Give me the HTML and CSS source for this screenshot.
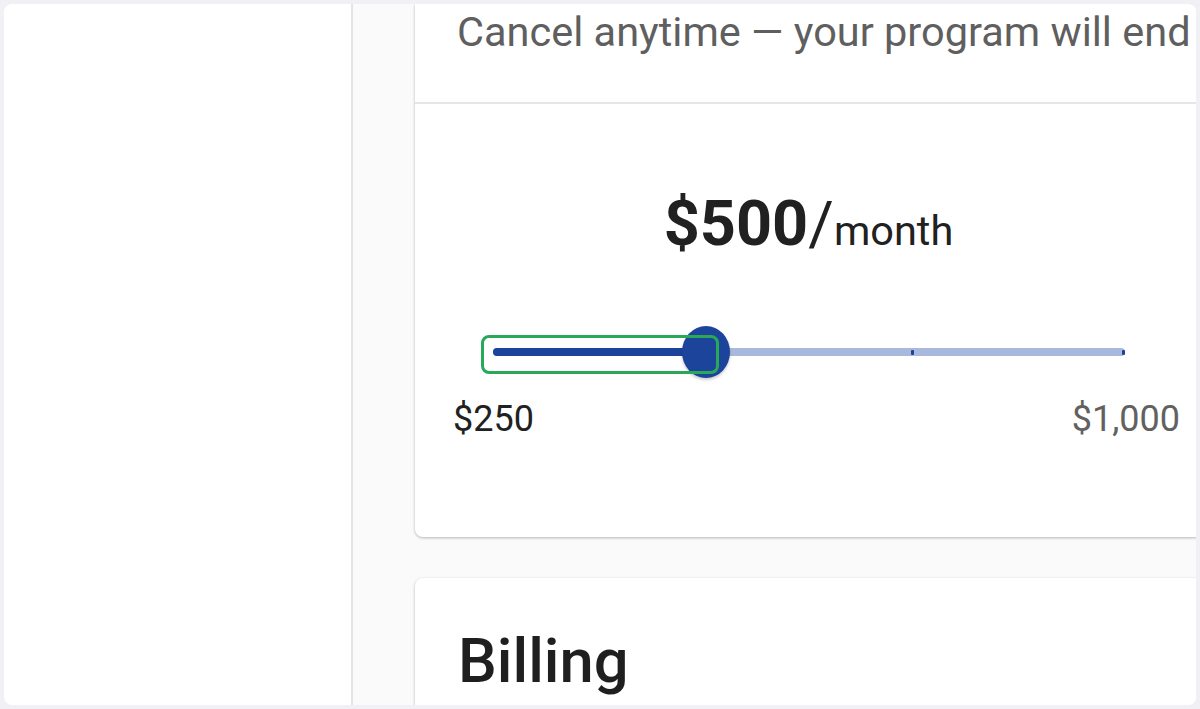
FILE: index.html
```html
<!DOCTYPE html>
<html lang="en">
<head>
    <meta charset="UTF-8">
    <title>Membership</title>
    <link rel="stylesheet" href="styles.css">
</head>
<body>
    <div class="frame">
        <div class="window">
            <aside class="sidebar"></aside>
            <main class="content">
                <section class="card plan">
                    <div class="note">
                        <p>Cancel anytime — your program will end</p>
                    </div>
                    <div class="amount">
                        <div class="price"><b>$500</b><span class="slash">/</span><span class="per">month</span></div>
                        <div class="slider">
                            <div class="track">
                                <div class="fill" style="width:33.33%"></div>
                                <i class="tick" style="left:66.66%"></i>
                                <i class="tick" style="left:100%"></i>
                                <div class="thumb" style="left:33.33%"></div>
                            </div>
                            <div class="focus"></div>
                        </div>
                        <div class="range">
                            <span class="min">$250</span>
                            <span class="max">$1,000</span>
                        </div>
                    </div>
                </section>
                <section class="card billing">
                    <h2>Billing</h2>
                </section>
            </main>
        </div>
    </div>
</body>
</html>
```

FILE: styles.css
```css
*{
    margin:0;
    padding:0;
    box-sizing:border-box;
}
html,body{
    width:1200px;
    height:709px;
    overflow:hidden;
}
body{
    background-color:#f1f0f5;
    font-family:Roboto, "Liberation Sans", sans-serif;
    color:#212121;
}
.frame{
    height:709px;
    padding:4px;
}
.window{
    display:flex;
    height:701px;
    background-color:#fff;
    border-radius:8px;
    overflow:hidden;
}
.sidebar{
    width:349px;
    flex:none;
    border-right:2px solid #e4e4e4;
}
.content{
    flex:1;
    min-width:0;
    background-color:#fafafa;
    padding-left:62px;
}
.card{
    width:787px;
    background-color:#fff;
    border-radius:0 0 8px 8px;
    box-shadow:0 1px 3px rgba(0,0,0,.28);
}
.note{
    height:100px;
    padding:3px 0 0 42px;
    border-bottom:2px solid #e6e6e6;
    white-space:nowrap;
    overflow:hidden;
}
.note p{
    font-size:41.5px;
    line-height:50px;
    color:#5f5f5f;
}
.amount{
    height:433px;
    padding-top:82px;
}
.price{
    text-align:center;
    line-height:76px;
}
.price b{
    font-size:63px;
    font-weight:700;
}
.slash{
    font-size:62px;
    font-weight:400;
}
.per{
    font-size:41.5px;
}
.slider{
    position:relative;
    margin:48px 77px 0 78px;
    height:52px;
    display:flex;
    align-items:center;
}
.track{
    position:relative;
    width:100%;
    height:8px;
    border-radius:4px;
    background-color:#a9b9dd;
}
.fill{
    height:100%;
    border-radius:4px;
    background-color:#1c449b;
}
.tick{
    position:absolute;
    top:2px;
    width:3px;
    height:5px;
    margin-left:-3px;
    background-color:#1c449b;
    border-radius:1px;
}
.thumb{
    position:absolute;
    top:50%;
    width:48px;
    height:52px;
    margin:-26px 0 0 -22px;
    border-radius:50%;
    background-color:#1c449b;
    box-shadow:0 2px 3px rgba(0,0,0,.2);
}
.focus{
    position:absolute;
    left:-12px;
    top:9px;
    width:238px;
    height:39px;
    border:3px solid #2aa85a;
    border-radius:8px;
}
.range{
    display:flex;
    justify-content:space-between;
    margin:16px 22px 0 38px;
    font-size:36px;
    line-height:50px;
}
.min{
    color:#212121;
}
.max{
    color:#616161;
}
.billing{
    margin-top:41px;
    border-radius:8px;
    height:200px;
    padding:45px 0 0 43px;
}
.billing h2{
    font-size:61.5px;
    font-weight:500;
    line-height:76px;
    color:#1f1f1f;
}
```
